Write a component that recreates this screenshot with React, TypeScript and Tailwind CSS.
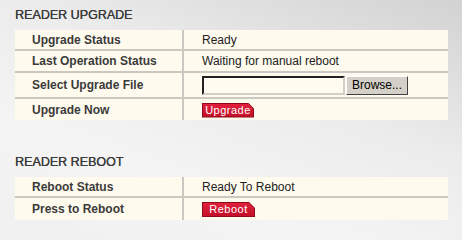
const font = "font-['Liberation_Sans',Arial,sans-serif]";

type Row = { label: string; value: React.ReactNode; h: string };

function RedButton({ label, width }: { label: string; width: string }) {
  return (
    <span
      className={`inline-block ${width} h-[15px] bg-[#8e0a1c] p-px [clip-path:polygon(0_0,calc(100%-6px)_0,100%_6px,100%_100%,0_100%)]`}
    >
      <span className="flex h-full w-full items-center justify-center bg-[linear-gradient(#e0203c,#c4102a)] text-[11px] leading-none text-white tracking-[0.5px] [clip-path:polygon(0_0,calc(100%-5px)_0,100%_5px,100%_100%,0_100%)]">
        {label}
      </span>
    </span>
  );
}

function FilePicker() {
  return (
    <div className="flex items-center gap-px">
      <div className="h-[19px] w-[143px] border-2 border-t-[#222] border-l-[#222] border-b-[#d4d0c8] border-r-[#d4d0c8] bg-[#fffbf0]" />
      <div className="flex h-[19px] w-[62px] items-center justify-center border border-t-white border-l-white border-b-[#404040] border-r-[#404040] bg-[#d4d0c8] text-[12px] text-black">
        Browse...
      </div>
    </div>
  );
}

function Section({ title, rows, className }: { title: string; rows: Row[]; className?: string }) {
  return (
    <div className={className}>
      <h2 className="mb-[7px] pl-[15px] text-[12.5px] leading-[15px] text-[#3a3a3a] [text-shadow:0.3px_0_0_#3a3a3a]">
        {title}
      </h2>
      <table className="ml-[15px] w-[433px] border-collapse bg-[#fffaee]">
        <tbody>
          {rows.map((row, i) => (
            <tr key={row.label} className={`${row.h} ${i < rows.length - 1 ? "border-b-2 border-[#cbc8c2]" : ""}`}>
              <td className="w-[168px] border-r-2 border-[#cbc8c2] pl-[17px] text-[12px] font-bold text-[#3a3a3a]">
                {row.label}
              </td>
              <td className="pl-[18px] text-[12px] text-[#222]">{row.value}</td>
            </tr>
          ))}
        </tbody>
      </table>
    </div>
  );
}

export default function App() {
  const upgradeRows: Row[] = [
    { label: "Upgrade Status", value: "Ready", h: "h-[20px]" },
    { label: "Last Operation Status", value: "Waiting for manual reboot", h: "h-[22px]" },
    { label: "Select Upgrade File", value: <FilePicker />, h: "h-[26px]" },
    { label: "Upgrade Now", value: <RedButton label="Upgrade" width="w-[52px]" />, h: "h-[22px]" },
  ];

  const rebootRows: Row[] = [
    { label: "Reboot Status", value: "Ready To Reboot", h: "h-[20px]" },
    { label: "Press to Reboot", value: <RedButton label="Reboot" width="w-[53px]" />, h: "h-[23px]" },
  ];

  return (
    <div
      className={`${font} h-[240px] w-[462px] overflow-hidden bg-[linear-gradient(200deg,#d2d2d2_0%,#ececec_40%,#f4f4f4_70%,#f0f0f0_100%)] pt-[8px]`}
    >
      <Section title="READER UPGRADE" rows={upgradeRows} />
      <Section title="READER REBOOT" rows={rebootRows} className="mt-[35px]" />
    </div>
  );
}
